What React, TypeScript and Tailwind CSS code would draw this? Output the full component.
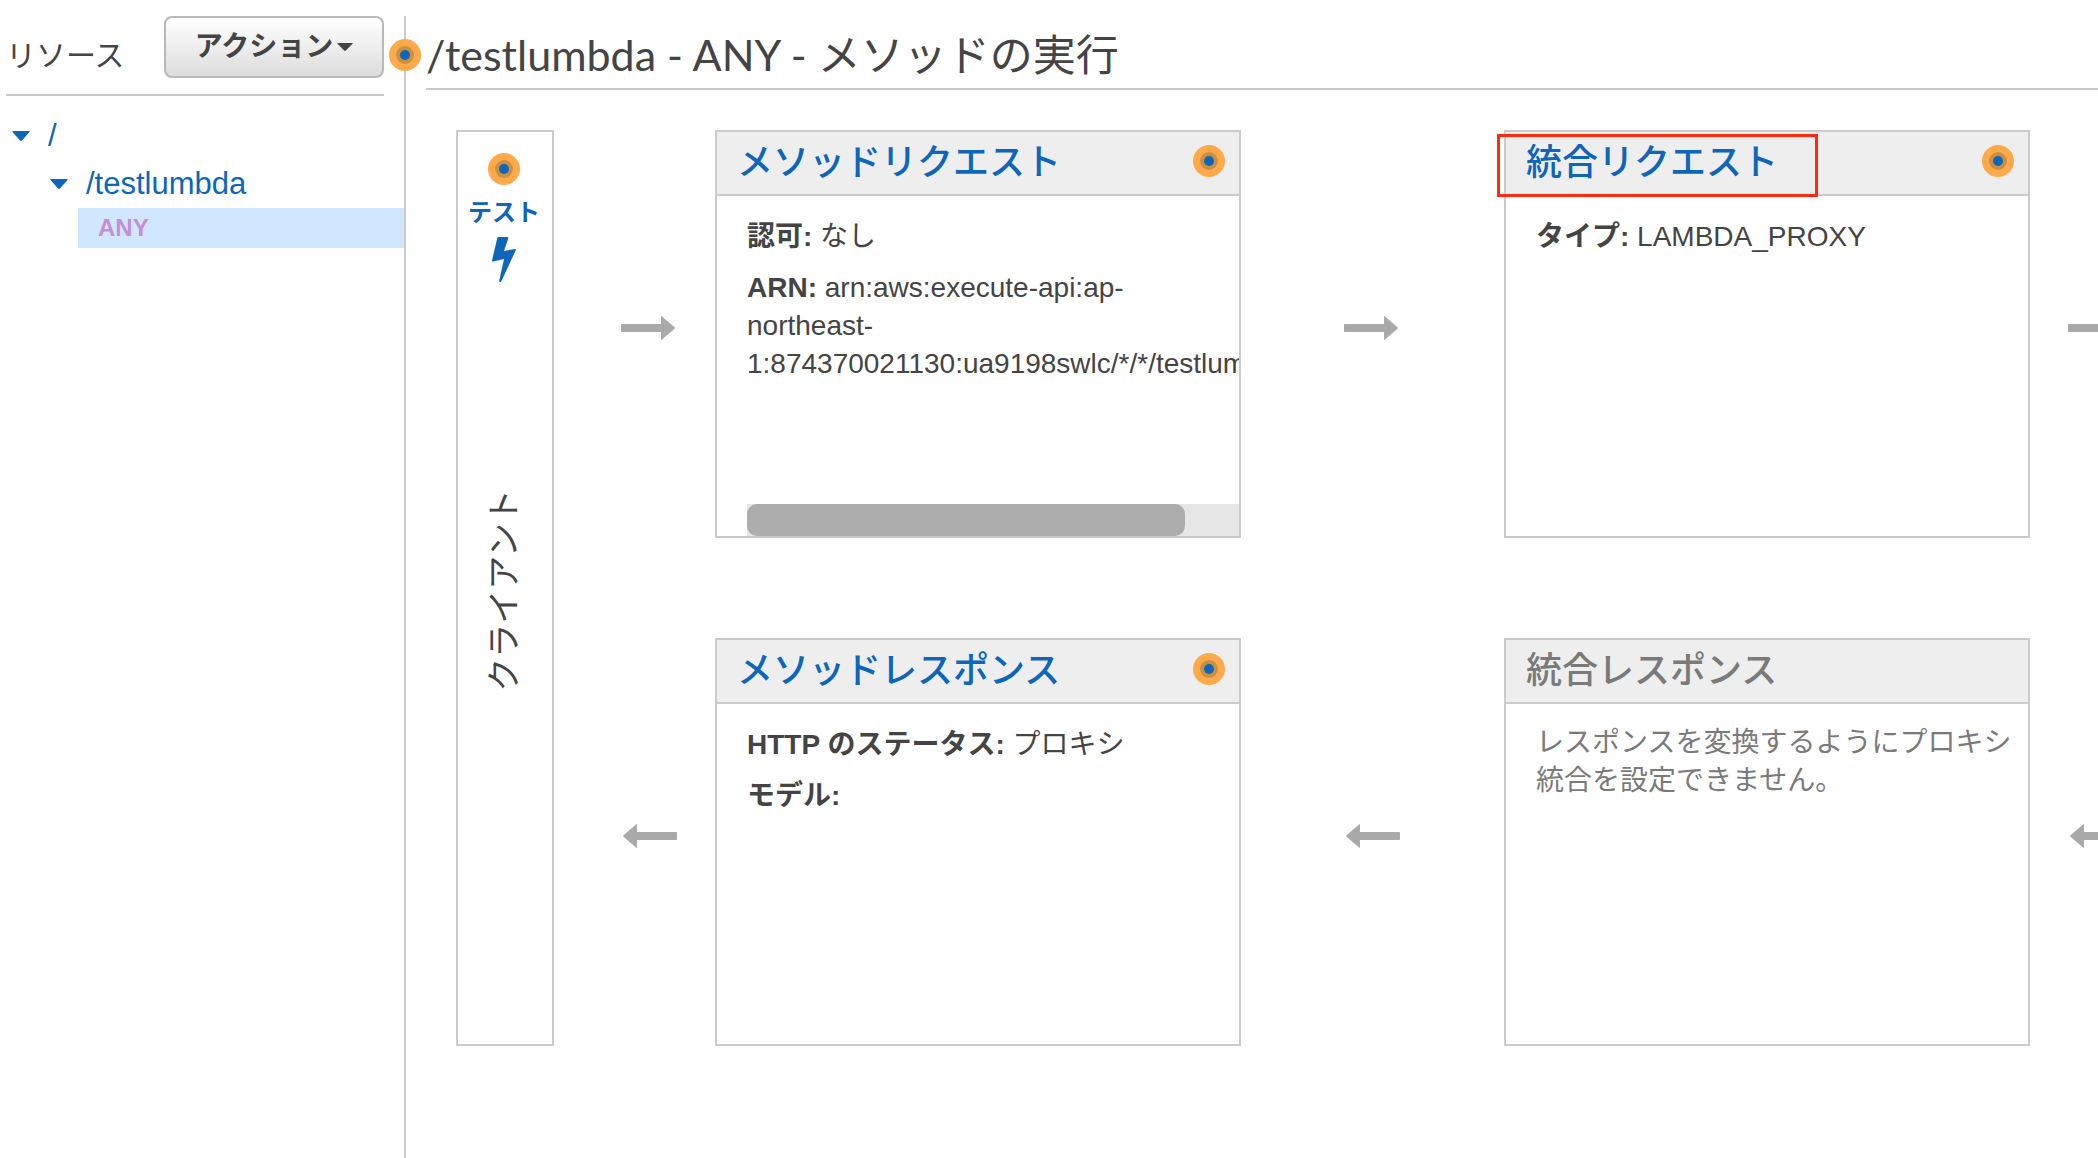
import React from 'react';

type ArrowProps = { direction: 'left' | 'right' };

const HintDot: React.FC = () => (
  <svg className="w-8 h-8 shrink-0" viewBox="0 0 32 32" aria-hidden="true">
    <circle cx="16" cy="16" r="16" fill="#ffa94a" />
    <circle cx="16" cy="16" r="9" fill="#cb8f42" />
    <circle cx="16" cy="16" r="5" fill="#0d66ba" />
  </svg>
);

const Caret: React.FC<{ className: string }> = ({ className }) => (
  <svg className={className} viewBox="0 0 18 10" preserveAspectRatio="none" fill="currentColor" aria-hidden="true">
    <path d="M1 0h16q1 0 .5 1L10 9.5q-1 .8-2 0L.5 1Q0 0 1 0z" />
  </svg>
);

const Arrow: React.FC<ArrowProps> = ({ direction }) => (
  <svg
    className={`w-[54px] h-6 shrink-0 ${direction === 'left' ? 'rotate-180 ml-0.5' : ''}`}
    viewBox="0 0 54 24"
    fill="#a9a9a9"
    aria-hidden="true"
  >
    <path d="M1 8h39V.5q0-.8 1 0L53.5 11.300q.6.700 0 1.400L41 23.500q-1 .8-1 0V16H1q-1 0-1-1V9q0-1 1-1z" />
  </svg>
);

type CardProps = {
  title: string;
  disabled?: boolean;
  highlighted?: boolean;
  scrollable?: boolean;
  children: React.ReactNode;
};

const StageCard: React.FC<CardProps> = ({ title, disabled, highlighted, scrollable, children }) => (
  <section className="flex flex-col min-w-0 border-2 border-[#cbcbcb]">
    <header className="relative flex items-center justify-between h-16 border-b-2 border-[#cbcbcb] bg-[#eeeeee] pl-5 pr-[14px]">
      <h2 className="text-4xl font-medium">
        {disabled ? (
          <span className="text-[#7a7a7a]">{title}</span>
        ) : (
          <a href="#" className="text-[#0d66ba]">{title}</a>
        )}
      </h2>
      {!disabled && (
        <div className="self-start pt-[13px]">
          <HintDot />
        </div>
      )}
      {highlighted && (
        <div className="absolute -left-[9px] top-0.5 w-[321px] h-[63px] border-3 border-[#ff2a12] pointer-events-none" />
      )}
    </header>
    <div
      className={`flex-1 flex flex-col gap-[13px] pl-[30px] text-[28px] leading-[38px] overflow-hidden ${
        disabled ? 'pt-5' : 'pt-[22px]'
      }`}
    >
      {children}
      {scrollable && (
        <div className="mt-auto h-8 bg-[#e6e6e6]">
          <div className="w-[89%] h-8 rounded-[10px] bg-[#adadad]" />
        </div>
      )}
    </div>
  </section>
);

const Sidebar: React.FC = () => (
  <aside className="w-[406px] shrink-0 border-r-2 border-[#cbcbcb]">
    <div className="flex justify-between ml-1.5 mr-5 pb-4 border-b-2 border-[#cbcbcb]">
      <h2 className="text-[30px] leading-10 pt-5">リソース</h2>
      <button className="flex items-center justify-center gap-1 w-[220px] h-[62px] rounded-lg border-2 border-[#b9b9b9] bg-linear-to-b from-white to-[#dddddd] text-[28px] font-bold">
        アクション
        <Caret className="w-4 h-2" />
      </button>
    </div>
    <ul className="pt-4 text-[31px] leading-[48px] text-[#0d66ba]">
      <li>
        <a href="#" className="flex items-center gap-[18px] pl-3">
          <Caret className="w-[18px] h-2.5" />/
        </a>
        <ul>
          <li>
            <a href="#" className="flex items-center gap-[18px] pl-[50px]">
              <Caret className="w-[18px] h-2.5" />
              /testlumbda
            </a>
            <ul>
              <li className="ml-[78px] bg-[#d0e7ff]">
                <a href="#" className="block pl-5 text-2xl leading-10 font-bold text-[#c58fd2]">ANY</a>
              </li>
            </ul>
          </li>
        </ul>
      </li>
    </ul>
  </aside>
);

const ClientColumn: React.FC = () => (
  <section className="row-span-2 flex flex-col items-center border-2 border-[#cbcbcb] pt-[21px] pr-0.5">
    <HintDot />
    <button className="flex flex-col items-center gap-1 pt-2 text-2xl leading-10 font-bold text-[#0d66ba]">
      テスト
      <svg className="w-6 h-[46px]" viewBox="0 0 24 46" fill="currentColor" aria-hidden="true">
        <path d="M6.500 0H15.500q1.200 0 .8 1.200L12 14l11-2q1.200-.1.800 1.200L9.500 44q-.5 1.200-1.600 1-.9-.2-.7-1.300L12 22 1 24.500q-1.200.1-1-1L5.300 1Q5.600 0 6.500 0z" />
      </svg>
    </button>
    <div className="mt-[206px] rotate-180 text-[34px] leading-10 [writing-mode:vertical-rl] [text-orientation:sideways]">
      クライアント
    </div>
  </section>
);

export default function App() {
  return (
    <div className="flex min-h-screen pt-4 bg-white overflow-hidden text-[#444444] font-['Liberation_Sans','Noto_Sans_CJK_JP',sans-serif]">
      <Sidebar />
      <main className="relative flex-1 min-w-0">
        <div className="absolute -left-[17px] top-[23px]">
          <HintDot />
        </div>
        <h1 className="ml-5 h-[74px] border-b-2 border-[#cbcbcb] text-[43px] leading-[78px] whitespace-nowrap font-['Lato','Noto_Sans_CJK_JP',sans-serif]">
          /testlumbda - ANY - メソッドの実行
        </h1>
        <div className="grid grid-cols-[98px_161px_1fr_263px_1fr_68px] auto-rows-[minmax(408px,auto)] gap-y-[100px] pt-10 pl-[50px]">
          <ClientColumn />
          <div className="pt-[186px] pl-[67px]"><Arrow direction="right" /></div>
          <StageCard title="メソッドリクエスト" scrollable>
            <p><b>認可:</b> なし</p>
            <p className="whitespace-nowrap">
              <b>ARN:</b> arn:aws:execute-api:ap-
              <br />
              northeast-
              <br />
              1:874370021130:ua9198swlc/*/*/testlumbda
            </p>
          </StageCard>
          <div className="pt-[186px] pl-[103px]"><Arrow direction="right" /></div>
          <StageCard title="統合リクエスト" highlighted>
            <p><b>タイプ:</b> LAMBDA_PROXY</p>
          </StageCard>
          <div className="flex items-start pt-[186px] pl-[38px]"><Arrow direction="right" /></div>

          <div className="pt-[186px] pl-[67px]"><Arrow direction="left" /></div>
          <StageCard title="メソッドレスポンス">
            <p><b>HTTP のステータス:</b> プロキシ</p>
            <p><b>モデル:</b></p>
          </StageCard>
          <div className="pt-[186px] pl-[103px]"><Arrow direction="left" /></div>
          <StageCard title="統合レスポンス" disabled>
            <p className="text-[#7a7a7a]">レスポンスを変換するようにプロキシ統合を設定できません。</p>
          </StageCard>
          <div className="flex items-start pt-[186px] pl-[38px]"><Arrow direction="left" /></div>
        </div>
      </main>
    </div>
  );
}
